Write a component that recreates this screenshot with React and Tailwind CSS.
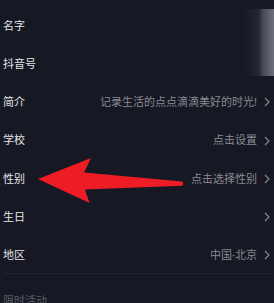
const rows = [
  { label: "名字" },
  { label: "抖音号" },
  { label: "简介", value: "记录生活的点点滴滴美好的时光!", arrow: true },
  { label: "学校", value: "点击设置", arrow: true },
  { label: "性别", value: "点击选择性别", arrow: true },
  { label: "生日", arrow: true },
  { label: "地区", value: "中国·北京", arrow: true },
];

function Chevron() {
  return (
    <svg width="6" height="10" viewBox="0 0 6 10" className="text-[#8a8b92]">
      <path d="M1 1 L5 5 L1 9" fill="none" stroke="currentColor" strokeWidth="1.1" />
    </svg>
  );
}

export default function App() {
  return (
    <div
      className="relative h-[303px] w-[274px] overflow-hidden bg-[#161823]"
      style={{ fontFamily: '"Noto Sans", "Noto Sans CJK SC", sans-serif' }}
    >
      <div className="pt-[7px]">
        {rows.map((row) => (
          <div
            key={row.label}
            className="flex h-[38.2px] items-center justify-between pl-[3px] pr-[4px]"
          >
            <span className="text-[11px] text-[#e4e4e6]">{row.label}</span>
            <div className="flex items-center gap-[7px]">
              {row.value && (
                <span className="text-[11px] text-[#8a8b92]">{row.value}</span>
              )}
              {row.arrow && <Chevron />}
            </div>
          </div>
        ))}
      </div>

      <div className="mx-[3px] mt-[-1px] h-px bg-[#23252f]" />

      <div className="pl-[3px] pt-[19px] text-[11px] text-[#5b5c63]">限时活动</div>

      {/* input highlight at top right */}
      <div className="absolute right-0 top-[9px] h-[67px] w-[30px] bg-[linear-gradient(to_right,transparent,#252733_50%,#464854_62%,#6c6e79)]" />

      {/* red annotation arrow */}
      <svg className="absolute left-0 top-0" width="274" height="303" viewBox="0 0 274 303">
        <path
          d="M38 179 L91 158 L84 172.5 L182 181.5 Q184.5 183.6 182 185.8 L85 189.5 L89.5 203 Z"
          fill="#ee1d25"
        />
      </svg>
    </div>
  );
}
